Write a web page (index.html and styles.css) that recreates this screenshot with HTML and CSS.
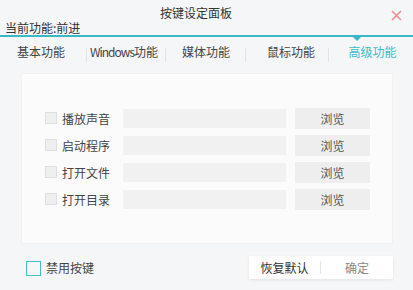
FILE: index.html
```html
<!DOCTYPE html>
<html>
  <head>
    <meta charset="UTF-8">
    <title>按键设定面板</title>
    <link rel="stylesheet" href="styles.css">
  </head>
  <body>
    <div class="window">
      <div class="header">
        <div class="title-row">
          <span class="title">按键设定面板</span>
          <svg class="close" width="11" height="11" viewBox="0 0 11 11">
            <path d="M1 1 L10 10 M10 1 L1 10" stroke="#f08c8f" stroke-width="1.6" fill="none"/>
          </svg>
        </div>
        <div class="current">当前功能:前进</div>
      </div>

      <div class="tabs">
        <div class="tab tab-1">基本功能</div>
        <div class="tab tab-2"><span class="latin">Windows</span>功能</div>
        <div class="tab tab-3">媒体功能</div>
        <div class="tab tab-4">鼠标功能</div>
        <div class="tab tab-5 active">高级功能</div>
      </div>

      <div class="panel">
        <div class="row">
          <span class="check"></span>
          <span class="label">播放声音</span>
          <span class="path-input"></span>
          <button class="browse">浏览</button>
        </div>
        <div class="row">
          <span class="check"></span>
          <span class="label">启动程序</span>
          <span class="path-input"></span>
          <button class="browse">浏览</button>
        </div>
        <div class="row">
          <span class="check"></span>
          <span class="label">打开文件</span>
          <span class="path-input"></span>
          <button class="browse">浏览</button>
        </div>
        <div class="row">
          <span class="check"></span>
          <span class="label">打开目录</span>
          <span class="path-input"></span>
          <button class="browse">浏览</button>
        </div>
      </div>

      <div class="footer">
        <label class="disable">
          <span class="disable-box"></span>
          <span>禁用按键</span>
        </label>
        <div class="actions">
          <button class="action">恢复默认</button>
          <span class="action-sep"></span>
          <button class="action confirm">确定</button>
        </div>
      </div>
    </div>
  </body>
</html>
```

FILE: styles.css
```css
body {
    margin: 0;
    background-color: #f4f6f8;
    font-family: "Noto Sans CJK SC", "Liberation Sans", sans-serif;
    font-size: 12px;
    color: #333;
}

.window {
    width: 413px;
    height: 290px;
    overflow: hidden;
}

.header {
    border-bottom: 2px solid #3ab8c8;
    height: 35px;
}

.title-row {
    display: flex;
    align-items: center;
    height: 17px;
    padding: 4px 11px 0 160px;
}

.title {
    color: #333;
    line-height: 17px;
}

.close {
    margin-left: auto;
    margin-top: 6px;
}

.current {
    padding-left: 5px;
    line-height: 14px;
    color: #333;
}

.tabs {
    display: flex;
    height: 29px;
    align-items: center;
}

.tab {
    position: relative;
    color: #444;
    line-height: 16px;
    text-align: center;
    margin-top: 1px;
}

.latin {
    letter-spacing: -1px;
}

.tab-1 { width: 82px; }
.tab-2 { width: 84px; }
.tab-3 { width: 80px; }
.tab-4 { width: 90px; }
.tab-5 { width: 73px; }

.tab + .tab::after {
    content: "";
    position: absolute;
    top: 4px;
    height: 14px;
    width: 1px;
    background-color: #e2e4e6;
}

.tab-2::after { left: 4px; }
.tab-3::after { left: -1px; }
.tab-4::after { left: -1px; }
.tab-5::after { left: -8px; }

.tab.active {
    color: #3cbccc;
}

.tab.active::before {
    content: "";
    position: absolute;
    top: -7px;
    left: 17px;
    border-left: 4px solid transparent;
    border-right: 4px solid transparent;
    border-top: 4px solid #3ab8c8;
}

.panel {
    margin: 7px 20px 0 21px;
    height: 171px;
    box-sizing: border-box;
    background-color: #fbfbfc;
    border: 1px solid #f0f1f3;
    padding: 34px 0 0 23px;
    display: flex;
    flex-direction: column;
    gap: 6px;
}

.row {
    display: flex;
    align-items: center;
    height: 21px;
}

.check {
    width: 10px;
    height: 10px;
    border: 1px solid #dedfe0;
    background-color: #efefef;
    margin-top: -1px;
}

.label {
    margin-left: 5px;
    width: 48px;
    color: #444;
    line-height: 16px;
}

.path-input {
    margin-left: 13px;
    width: 163px;
    height: 19px;
    background-color: #f1f1f1;
}

.browse {
    margin-left: 9px;
    width: 75px;
    height: 21px;
    border: none;
    padding: 0;
    background-color: #eeeeee;
    color: #555;
    font-family: inherit;
    font-size: 12px;
}

.footer {
    display: flex;
    align-items: center;
    margin-top: 12px;
    padding: 0 20px 0 26px;
    height: 23px;
}

.disable {
    display: flex;
    align-items: center;
    gap: 5px;
    color: #444;
}

.disable-box {
    width: 13px;
    height: 13px;
    border: 1px solid #45c0cf;
    margin-top: 1px;
}

.actions {
    margin-left: auto;
    display: flex;
    align-items: center;
    height: 23px;
    background-color: #ffffff;
    box-shadow: 0 1px 3px rgba(0, 0, 0, 0.08);
}

.action {
    width: 71px;
    height: 23px;
    border: none;
    padding: 0;
    background: none;
    color: #333;
    font-family: inherit;
    font-size: 12px;
}

.action.confirm {
    width: 72px;
    color: #888;
}

.action-sep {
    width: 1px;
    height: 13px;
    background-color: #e4e4e4;
}
```
